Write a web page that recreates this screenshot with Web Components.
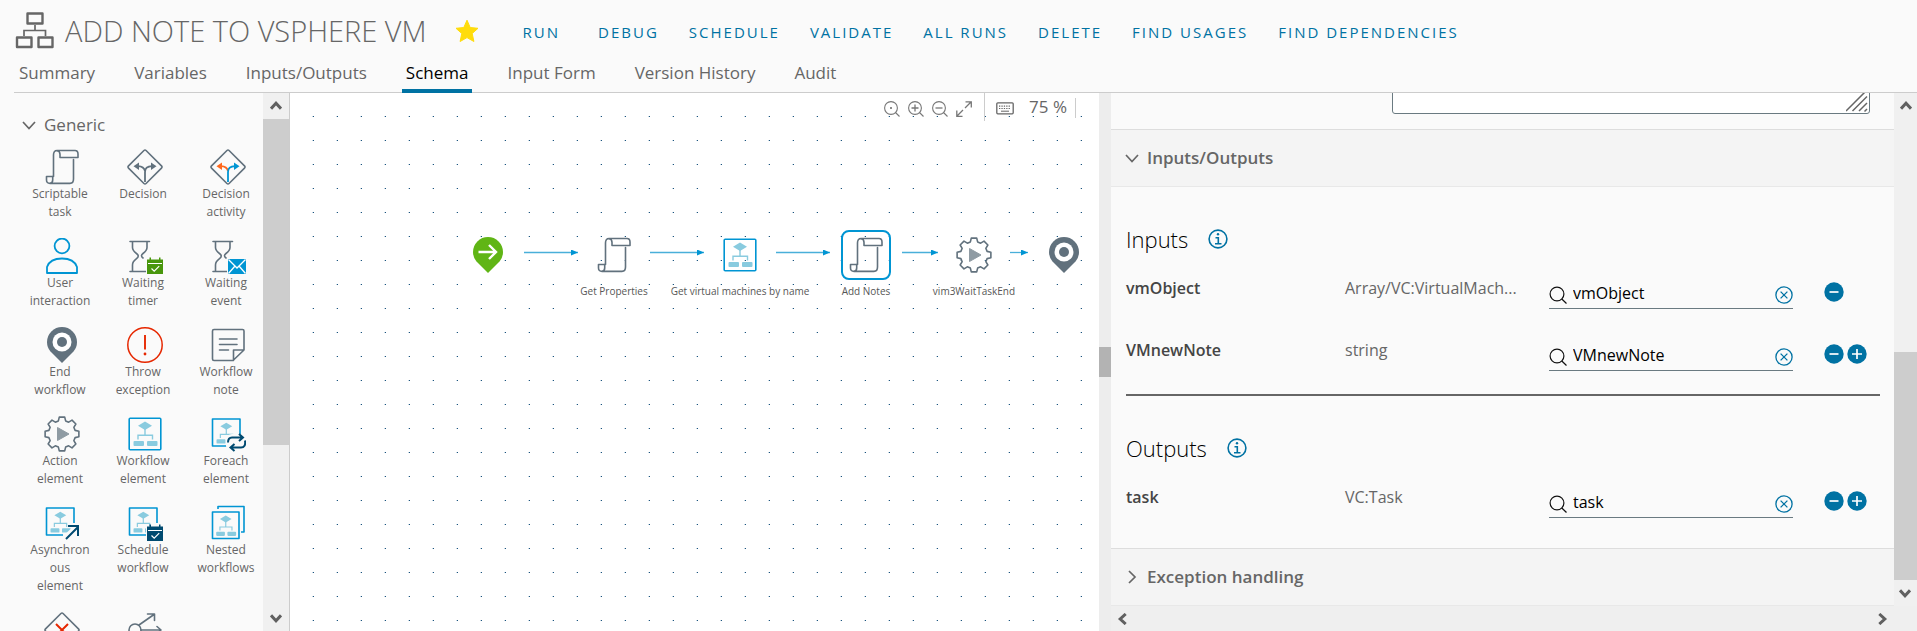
<!DOCTYPE html>
<html lang="en">
<head>
<meta charset="utf-8">
<title>Add note to vSphere VM</title>
<style>
  html, body { margin: 0; height: 100%; }
  body { font-family: "Open Sans", "Noto Sans", sans-serif; color: #666; background: #fafafa; overflow: hidden; }
</style>
</head>
<body>
<workflow-editor></workflow-editor>
<script>
const define = (name, html, setup) => {
  const tpl = document.createElement('template');
  tpl.innerHTML = html;
  customElements.define(name, class extends HTMLElement {
    connectedCallback() {
      if (this.shadowRoot) return;
      const root = this.attachShadow({ mode: 'open' });
      root.append(tpl.content.cloneNode(true));
      if (setup) setup(this, root);
    }
  });
};

/* ---------- icons ---------- */
const gear = (() => {
  const p = [];
  for (let i = 0; i < 8; i++) {
    const c = i * Math.PI / 4;
    for (const [d, r] of [[-0.27, 13.6], [-0.16, 17.1], [0.16, 17.1], [0.27, 13.6]])
      p.push((18 + r * Math.sin(c + d)).toFixed(2) + ' ' + (18 - r * Math.cos(c + d)).toFixed(2));
  }
  return 'M' + p.join('L') + 'Z';
})();
const G = 'fill="none" stroke="#61717d" stroke-width="1.6" stroke-linejoin="round" stroke-linecap="round"';
const flowInner = '<path d="M18 5.5L25 9.7 18 13.9 11 9.7Z M7.5 25h8.5q1 0 1 1v3q0 1-1 1H7.500q-1 0-1-1v-3q0-1 1-1Z M21 25h8.500q1 0 1 1v3q0 1-1 1H21q-1 0-1-1v-3q0-1 1-1Z" fill="#89cbdf"/><path d="M18 13v6M11 23.500V19.300h14.500v4.200" fill="none" stroke="#89cbdf" stroke-width="1.4"/>';
const flow = '<rect x="2.200" y="2.200" width="31.600" height="31.600" rx="1" fill="none" stroke="#0095d3" stroke-width="1.600"/>' + flowInner;
const openFlow = '<path d="M30 18V3H2.500V30H19" fill="none" stroke="#0095d3" stroke-width="1.600" stroke-linejoin="round"/><g transform="translate(1 2) scale(.85)">' + flowInner + '</g>';
const glass = `<g ${G}><path d="M3 3.500H22.500M3 33.500H19M5.500 3.500v6q0 3 4 6 3.500 2.500 0 5.200-4 3-4 6.300v6.500M20 3.500v6q0 3-4 6-3 2.300 0 4.500"/></g>`;
const cal = c => `<path d="M19 21h18v16H19z" fill="#fafafa"/><path d="M20 21.500h2.500v-2h1.500v2h8v-2h1.500v2H36V36H20Z" fill="${c}"/><path d="M21 25.500h14M24.500 30.500l2.700 2.700 5-5" fill="none" stroke="#fff" stroke-width="1.200"/>`;
const diamond = '<rect x="5.600" y="5.600" width="24.800" height="24.800" rx="1.500" transform="rotate(45 18 18)" fill="none" stroke="#61717d" stroke-width="1.600"/>';
const split = (l, r) => diamond + `<path d="M18 22q-1-4.500-7-4.800" fill="none" stroke="${l}" stroke-width="1.800"/><path d="M12 13.500V21L6.500 17.200Z" fill="${l}"/><path d="M18 33V23q0-5.500 7-5.800" fill="none" stroke="${r}" stroke-width="1.800"/><path d="M24 13.500V21L29.500 17.200Z" fill="${r}"/>`;
const lens = '<circle cx="7" cy="7" r="6.400"/><path d="M11.500 11.500L15.500 15.500"/>';
const ICONS = {
  script: [36, `<g ${G}><path d="M9.500 27.500V6Q9.500 1.500 13 1.500H31Q34 1.500 34 5V8.500H16V5.500Q16 2 13 1.700M29.500 10.500V30Q29.500 34.400 26 34.400H6Q2.500 34.400 2.500 31V27.500H8.700V31Q8.700 34 6 34.300"/></g>`],
  decision: [36, split('#61717d', '#61717d')],
  activity: [36, split('#ff681c', '#0095d3')],
  user: [36, '<g fill="none" stroke="#0095d3" stroke-width="1.800" stroke-linejoin="round"><circle cx="18" cy="8" r="7.400"/><path d="M3 35V29Q6 20.500 18 20.500T33 29V35Z"/></g>'],
  timer: [36, glass + cal('#48960c')],
  event: [36, glass + '<path d="M17 20h21v17H17z" fill="#fafafa"/><path d="M18 21H36V36H18Z" fill="#0095d3"/><path d="M18.500 21.500L27 30 35.500 21.500M18.500 35.500L25 28M35.500 35.500L29 28" fill="none" stroke="#fff" stroke-width="1.300"/>'],
  end: [36, '<path d="M18 36L6.500 24.500Q3 20.500 3 15A15 15 0 0 1 33 15Q33 20.500 29.500 24.500Z" fill="#61717d"/><circle cx="18" cy="15" r="9.500" fill="#fff"/><circle cx="18" cy="15" r="5" fill="#61717d"/>'],
  start: [36, '<path d="M18 36L6.500 24.500Q3 20.500 3 15A15 15 0 0 1 33 15Q33 20.500 29.500 24.500Z" fill="#60b515"/><path d="M8.500 15H26M19 8l7 7-7 7" fill="none" stroke="#fff" stroke-width="2.400"/>'],
  exception: [36, '<circle cx="18" cy="18" r="17.200" fill="none" stroke="#e62700" stroke-width="1.500"/><path d="M18 8V22.500" stroke="#e62700" stroke-width="1.900"/><circle cx="18" cy="27" r="1.400" fill="#e62700"/>'],
  note: [36, `<g ${G}><path d="M34 23V4Q34 2.500 32.500 2.500H4Q2.500 2.500 2.500 4V32Q2.500 33.500 4 33.500H23L34 23H23.500V33.500M9.500 12H27M9.500 17.500H27M9.500 23H18.500"/></g>`],
  action: [36, `<path d="${gear}" ${G}/><path d="M13.500 11.500L25 18 13.500 24.500Z" fill="#8f9ba3" stroke="#8f9ba3"/>`],
  workflow: [36, flow],
  foreach: [36, openFlow + '<rect x="16" y="18" width="21" height="18" rx="6" fill="#fafafa"/><path d="M18 26.500Q18 21.500 22 21.500H32M29 18l4 3.500-4 3.500M35 24.500Q36 31.500 31 31.500H21M24.500 28l-4 3.500 4 3.500" fill="none" stroke="#004a70" stroke-width="2"/>'],
  async: [36, openFlow + '<path d="M19.500 34L34 20.500" stroke="#fafafa" stroke-width="5"/><path d="M22 34L34 22M24 21H34V31" fill="none" stroke="#004a70" stroke-width="2"/>'],
  schedule: [36, openFlow + cal('#004a70')],
  nested: [36, '<path d="M8 4V1.500H34V27H31M2.500 7H29V33.500H2.500Z" fill="none" stroke="#0095d3" stroke-width="1.600" stroke-linejoin="round"/><g transform="translate(.8 6) scale(.83)">' + flowInner + '</g>'],
  error: [36, diamond + '<path d="M12 12L24 24M24 12L12 24" stroke="#e62700" stroke-width="2"/>'],
  switch: [36, `<g ${G}><circle cx="8" cy="18" r="6"/><path d="M14 18H34M30 14.500L34 18 30 21.500M12 13L27 2.500M20.500 2H27.500V8.500M12 23L27 33.500"/></g>`],
  tree: [40, '<g fill="none" stroke="#666"><path d="M13.500 2.500H28.500V12.500H13.500ZM3 26.500H17.500V36H3ZM24.500 26.500H38.500V36H24.500Z" stroke-width="2.400" stroke-linejoin="round"/><path d="M21 14V19M10 25V19.500H31.500V25" stroke-width="1.700"/></g>'],
  star: [24, '<path d="M12 1.200L15.200 8.500 23 9.300 17.200 14.500 18.900 22.500 12 18.600 5.100 22.500 6.800 14.500 1 9.300 8.800 8.500Z" fill="#ffdc0b" stroke="#ffdc0b" stroke-linejoin="round"/>'],
  down: [14, '<path d="M1 4L7 10.500 13 4" fill="none" stroke="#666" stroke-width="1.700"/>'],
  right: [14, '<path d="M4 1L10 7 4 13" fill="none" stroke="#666" stroke-width="1.700"/>'],
  arrow: [12, '<path d="M1 8.700L6 3.200 11 8.700" fill="none" stroke="#606060" stroke-width="3"/>'],
  zoomreset: [16, `<g fill="none" stroke="#777" stroke-width="1.100">${lens}</g><circle cx="7" cy="7" r="1" fill="#666"/>`],
  zoomin: [16, `<g fill="none" stroke="#777" stroke-width="1.100">${lens}<path d="M3.500 7h7M7 3.500v7" stroke-width="1.300"/></g>`],
  zoomout: [16, `<g fill="none" stroke="#777" stroke-width="1.100">${lens}<path d="M3.500 7h7" stroke-width="1.300"/></g>`],
  expand: [16, '<path d="M9 7L15 1M9.500.8H15.300V6.500M7 9L1 15M.8 9.500V15.300H6.500" fill="none" stroke="#777" stroke-width="1.300"/>'],
  keyboard: [18, '<rect x=".8" y="3.800" width="16.400" height="11" rx="1" fill="none" stroke="#666" stroke-width="1.300"/><path d="M3 7.200H15M3 9.500H15" stroke="#666" stroke-width="1.200" stroke-dasharray="1.300 1.100"/><path d="M5 12.200H13" stroke="#666"/>'],
  search: [18, '<g fill="none" stroke="#111" stroke-width="1.200"><circle cx="8" cy="8" r="6.900"/><path d="M12.800 13L17.500 17.500"/></g>'],
  clear: [18, '<g fill="none" stroke="#0072a3" stroke-width="1.300"><circle cx="9" cy="9" r="8.100"/><path d="M5.600 5.600L12.400 12.400M12.400 5.600L5.600 12.400"/></g>'],
  info: [20, '<circle cx="10" cy="10" r="8.900" fill="none" stroke="#0072a3" stroke-width="1.600"/><circle cx="10" cy="5.300" r="1.200" fill="#0072a3"/><path d="M7.500 8.700H10.300V14.700M7 14.800H13.500" fill="none" stroke="#0072a3" stroke-width="1.600"/>'],
  minus: [20, '<circle cx="10" cy="10" r="9.700" fill="#0072a3"/><path d="M5.500 10H14.500" stroke="#fff" stroke-width="1.700"/>'],
  plus: [20, '<circle cx="10" cy="10" r="9.700" fill="#0072a3"/><path d="M5 10H15M10 5V15" stroke="#fff" stroke-width="1.700"/>'],
  grip: [22, '<path d="M0 20L20 0M6.500 20L21 5.500M13 20L21 12M18.500 20.500L21 18" fill="none" stroke="#666" stroke-width="1.500"/>']
};
define('ui-icon', '<style>:host{display:block;flex:none}svg{display:block}</style>', (el, root) => {
  const [s, body] = ICONS[el.getAttribute('name')];
  root.innerHTML += `<svg width="${s}" height="${s}" viewBox="0 0 ${s} ${s}" aria-hidden="true">${body}</svg>`;
});
const makeIcon = name => {
  const icon = document.createElement('ui-icon');
  icon.setAttribute('name', name);
  return icon;
};

/* ---------- scrollbar ---------- */
define('scroll-rail', `
<style>
  :host { display: flex; flex-direction: column; background: #f0f0f0; box-sizing: border-box; }
  .cap { flex: none; height: 26px; display: grid; place-items: center; }
  .down { transform: rotate(180deg); }
  .before { flex: var(--before, 0) 1 0; }
  .thumb { flex: var(--thumb, 1) 1 0; background: #cdcdcd; }
  .after { flex: var(--after, 1) 1 0; }
</style>
<div class="cap"><ui-icon name="arrow"></ui-icon></div>
<div class="before"></div><div class="thumb"></div><div class="after"></div>
<div class="cap down"><ui-icon name="arrow"></ui-icon></div>`);

/* ---------- header ---------- */
define('action-button', `
<style>
  button { all: unset; font-size: 15px; line-height: 24px; letter-spacing: 2px; color: #0072a3; white-space: nowrap; cursor: pointer; }
</style><button type="button"><slot></slot></button>`);

define('tab-link', `
<style>
  a { display: block; box-sizing: border-box; height: 36px; padding: 4px 4px 0; font-size: 17px; line-height: 24px; color: #666; text-decoration: none; white-space: nowrap; }
  :host([active]) a { color: #000; border-bottom: 4px solid #0072a3; }
</style><a href="#"><slot></slot></a>`);

define('editor-header', `
<style>
  :host { display: block; padding-left: 14px; }
  .top { display: flex; align-items: center; height: 57px; padding-top: 4px; box-sizing: border-box; }
  h1 { margin: 0 28px 0 11px; font-size: 29px; line-height: 40px; font-weight: 300; white-space: nowrap; }
  .actions { display: flex; gap: 30px; margin-left: 44px; padding-top: 2px; }
  .actions :first-child { margin-right: 8px; }
  nav { display: flex; gap: 31px; height: 35px; padding-left: 1px; border-bottom: 1px solid #ccc; }
</style>
<div class="top">
  <ui-icon name="tree"></ui-icon>
  <h1>ADD NOTE TO VSPHERE VM</h1>
  <ui-icon name="star"></ui-icon>
  <div class="actions">
    <action-button>RUN</action-button><action-button>DEBUG</action-button><action-button>SCHEDULE</action-button><action-button>VALIDATE</action-button><action-button>ALL RUNS</action-button><action-button>DELETE</action-button><action-button>FIND USAGES</action-button><action-button>FIND DEPENDENCIES</action-button>
  </div>
</div>
<nav><tab-link>Summary</tab-link><tab-link>Variables</tab-link><tab-link>Inputs/Outputs</tab-link><tab-link active>Schema</tab-link><tab-link>Input Form</tab-link><tab-link>Version History</tab-link><tab-link>Audit</tab-link></nav>`);

/* ---------- palette ---------- */
define('palette-item', `
<style>
  button { all: unset; display: flex; flex-direction: column; align-items: center; width: 100%; cursor: grab; font-size: 12px; line-height: 18px; text-align: center; }
  ui-icon { margin-left: 4px; }
  span { width: 100%; min-height: 36px; overflow-wrap: anywhere; }
</style><button type="button"><span><slot></slot></span></button>`,
(el, root) => root.querySelector('button').prepend(makeIcon(el.getAttribute('icon'))));

define('element-palette', `
<style>
  :host { display: flex; flex: none; width: 290px; box-sizing: border-box; border-right: 1px solid #ccc; overflow: hidden; }
  .list { flex: 1; min-width: 0; overflow: hidden; padding: 20px 0 0 22px; }
  .group { all: unset; display: flex; align-items: center; gap: 8px; font-size: 17px; line-height: 24px; height: 24px; cursor: pointer; }
  .grid { display: grid; grid-template-columns: repeat(3, 64px); gap: 17px 19px; padding: 12px 0 0 6px; }
  scroll-rail { flex: none; width: 26px; --before: 0; --thumb: 326; --after: 160; }
</style>
<div class="list">
  <button type="button" class="group"><ui-icon name="down"></ui-icon>Generic</button>
  <div class="grid">
    <palette-item icon="script">Scriptable task</palette-item>
    <palette-item icon="decision">Decision</palette-item>
    <palette-item icon="activity">Decision activity</palette-item>
    <palette-item icon="user">User interaction</palette-item>
    <palette-item icon="timer">Waiting timer</palette-item>
    <palette-item icon="event">Waiting event</palette-item>
    <palette-item icon="end">End workflow</palette-item>
    <palette-item icon="exception">Throw exception</palette-item>
    <palette-item icon="note">Workflow note</palette-item>
    <palette-item icon="action">Action element</palette-item>
    <palette-item icon="workflow">Workflow element</palette-item>
    <palette-item icon="foreach">Foreach element</palette-item>
    <palette-item icon="async">Asynchronous element</palette-item>
    <palette-item icon="schedule">Schedule workflow</palette-item>
    <palette-item icon="nested">Nested workflows</palette-item>
    <palette-item icon="error"></palette-item>
    <palette-item icon="switch"></palette-item>
  </div>
</div>
<scroll-rail></scroll-rail>`);

/* ---------- canvas ---------- */
define('flow-node', `
<style>
  :host { position: absolute; left: var(--x); top: 137px; width: 160px; margin-left: -80px; display: flex; flex-direction: column; align-items: center; font-size: 10px; line-height: 16px; color: #565656; white-space: nowrap; }
  .box { width: 50px; height: 50px; box-sizing: border-box; display: grid; place-items: center; border: 2px solid transparent; border-radius: 8px; margin-bottom: 3px; }
  :host([selected]) .box { border-color: #0095d3; }
</style><div class="box"></div><slot></slot>`,
(el, root) => root.querySelector('.box').append(makeIcon(el.getAttribute('icon'))));

define('canvas-toolbar', `
<style>
  :host { position: absolute; top: 0; right: 23px; display: flex; align-items: flex-start; font-size: 17px; line-height: 24px; }
  button { all: unset; padding-top: 8px; margin-right: 8px; cursor: pointer; }
  button.keys { padding-top: 6px; margin: 0 15px 0 11px; }
  i { width: 1px; height: 28px; background: #ccc; }
  i.first { margin-left: 4px; }
  i.last { height: 20px; margin: 5px 0 0 8px; }
  span { padding-top: 2px; }
</style>
<button type="button" aria-label="Reset zoom"><ui-icon name="zoomreset"></ui-icon></button>
<button type="button" aria-label="Zoom in"><ui-icon name="zoomin"></ui-icon></button>
<button type="button" aria-label="Zoom out"><ui-icon name="zoomout"></ui-icon></button>
<button type="button" aria-label="Fit"><ui-icon name="expand"></ui-icon></button>
<i class="first"></i>
<button type="button" class="keys" aria-label="Shortcuts"><ui-icon name="keyboard"></ui-icon></button>
<span>75 %</span><i class="last"></i>`);

define('flow-canvas', `
<style>
  :host { display: block; position: relative; flex: 809 1 0; min-width: 0; background: #fff; overflow: hidden; }
  svg { display: block; width: 100%; height: 100%; }
</style>
<svg aria-hidden="true">
  <defs>
    <pattern id="dots" width="24" height="24" patternUnits="userSpaceOnUse"><rect x="23" y="23" width="1" height="1" fill="#1a5580"/><rect x="22" y="23" width="1" height="1" fill="#c5d3de"/></pattern>
    <marker id="tip" viewBox="0 0 7 6" markerWidth="7" markerHeight="6" refX="7" refY="3" markerUnits="userSpaceOnUse"><path d="M0 0L7 3 0 6Z" fill="#0095d3"/></marker>
  </defs>
  <rect width="100%" height="100%" fill="url(#dots)"/>
  <g stroke="#49afd9" stroke-width="1.300">
    <line x1="234" y1="159.500" x2="288" y2="159.500" marker-end="url(#tip)"/>
    <line x1="360" y1="159.500" x2="414" y2="159.500" marker-end="url(#tip)"/>
    <line x1="486" y1="159.500" x2="540" y2="159.500" marker-end="url(#tip)"/>
    <line x1="612" y1="159.500" x2="648" y2="159.500" marker-end="url(#tip)"/>
    <line x1="720" y1="159.500" x2="738" y2="159.500" marker-end="url(#tip)"/>
  </g>
</svg>
<flow-node icon="start" style="--x:198px"></flow-node>
<flow-node icon="script" style="--x:324px">Get Properties</flow-node>
<flow-node icon="workflow" style="--x:450px">Get virtual machines by name</flow-node>
<flow-node icon="script" selected style="--x:576px">Add Notes</flow-node>
<flow-node icon="action" style="--x:684px">vim3WaitTaskEnd</flow-node>
<flow-node icon="end" style="--x:774px"></flow-node>
<canvas-toolbar></canvas-toolbar>`);

/* ---------- properties panel ---------- */
define('panel-heading', `
<style>
  button { all: unset; box-sizing: border-box; display: flex; align-items: center; gap: 8px; width: 100%; height: 58px; padding-left: 14px; background: #f4f4f4; border-top: 1px solid #ddd; border-bottom: 1px solid #e8e8e8; font-size: 17px; line-height: 24px; font-weight: 600; cursor: pointer; }
</style><button type="button"><slot></slot></button>`,
(el, root) => root.querySelector('button').prepend(makeIcon(el.hasAttribute('closed') ? 'right' : 'down')));

define('info-title', `
<style>
  :host { display: flex; align-items: center; gap: 20px; height: 32px; margin: 36px 0 5px; }
  h3 { margin: 0; font-size: 22px; line-height: 32px; font-weight: 300; color: #000; }
</style><h3><slot></slot></h3><ui-icon name="info"></ui-icon>`);

define('binding-row', `
<style>
  :host { display: grid; grid-template-columns: 219fr 204fr 244fr 87fr; height: 62px; font-size: 16px; line-height: 24px; }
  label, .type { padding-top: 16px; white-space: nowrap; }
  label { font-weight: 600; color: #454545; }
  .field { display: flex; align-items: center; gap: 6px; min-width: 0; height: 27px; margin-top: 21px; border-bottom: 1px solid #6a7a81; }
  input { all: unset; flex: 1; width: 0; min-width: 0; height: 24px; line-height: 24px; color: #000; padding-bottom: 3px; }
  button { all: unset; cursor: pointer; }
  .tools { display: flex; align-items: flex-start; gap: 3px; padding: 22px 0 0 31px; }
</style>
<label for="value"></label>
<span class="type"></span>
<div class="field"><ui-icon name="search"></ui-icon><input id="value" type="text"><button type="button" aria-label="Clear"><ui-icon name="clear"></ui-icon></button></div>
<div class="tools"><button type="button" aria-label="Remove"><ui-icon name="minus"></ui-icon></button><button type="button" class="add" aria-label="Add"><ui-icon name="plus"></ui-icon></button></div>`,
(el, root) => {
  root.querySelector('label').textContent = el.getAttribute('name');
  root.querySelector('.type').textContent = el.getAttribute('type');
  root.querySelector('input').value = el.getAttribute('name');
  if (el.hasAttribute('single')) root.querySelector('.add').remove();
});

define('properties-panel', `
<style>
  :host { display: flex; flex-direction: row; flex: 806 1 0; min-width: 0; }
  .main { flex: 1; min-width: 0; display: flex; flex-direction: column; }
  .content { flex: 1; min-height: 0; overflow: hidden; }
  .above { position: relative; box-sizing: border-box; height: 36px; padding: 0 24px 15px 281px; overflow: hidden; display: flex; align-items: flex-end; }
  textarea { flex: 1; box-sizing: border-box; height: 80px; margin: 0; resize: none; border: 1px solid #6a7a81; border-radius: 3px; background: #fff; }
  .above ui-icon { position: absolute; right: 26px; bottom: 16px; }
  .body { padding: 0 14px 17px 15px; display: flow-root; }
  hr { border: 0; height: 2px; margin: 10px 0 0; background: #666; }
  .hbar { flex: none; height: 25px; display: flex; align-items: center; justify-content: space-between; padding: 0 6px; background: #efefef; }
  .left { transform: rotate(-90deg); } .rt { transform: rotate(90deg); }
  .side { flex: none; width: 23px; display: flex; flex-direction: column; background: #efefef; }
  scroll-rail { flex: 1; margin-bottom: 25px; --before: 233; --thumb: 228; --after: 0; }
</style>
<div class="main">
  <div class="content">
    <div class="above"><textarea aria-label="Description"></textarea><ui-icon name="grip"></ui-icon></div>
    <panel-heading>Inputs/Outputs</panel-heading>
    <div class="body">
      <info-title>Inputs</info-title>
      <binding-row name="vmObject" type="Array/VC:VirtualMach..." single></binding-row>
      <binding-row name="VMnewNote" type="string"></binding-row>
      <hr>
      <info-title>Outputs</info-title>
      <binding-row name="task" type="VC:Task"></binding-row>
    </div>
    <panel-heading closed>Exception handling</panel-heading>
  </div>
  <div class="hbar"><ui-icon class="left" name="arrow"></ui-icon><ui-icon class="rt" name="arrow"></ui-icon></div>
</div>
<div class="side"><scroll-rail></scroll-rail></div>`);

/* ---------- page ---------- */
define('workflow-editor', `
<style>
  :host { display: flex; flex-direction: column; height: 100vh; }
  main { flex: 1; min-height: 0; display: flex; }
  .splitter { flex: none; width: 12px; background: #ededed; display: flex; flex-direction: column; justify-content: center; }
  .splitter div { height: 30px; background: #b3b3b3; }
</style>
<editor-header></editor-header>
<main>
  <element-palette></element-palette>
  <flow-canvas></flow-canvas>
  <div class="splitter"><div></div></div>
  <properties-panel></properties-panel>
</main>`);
</script>
</body>
</html>
